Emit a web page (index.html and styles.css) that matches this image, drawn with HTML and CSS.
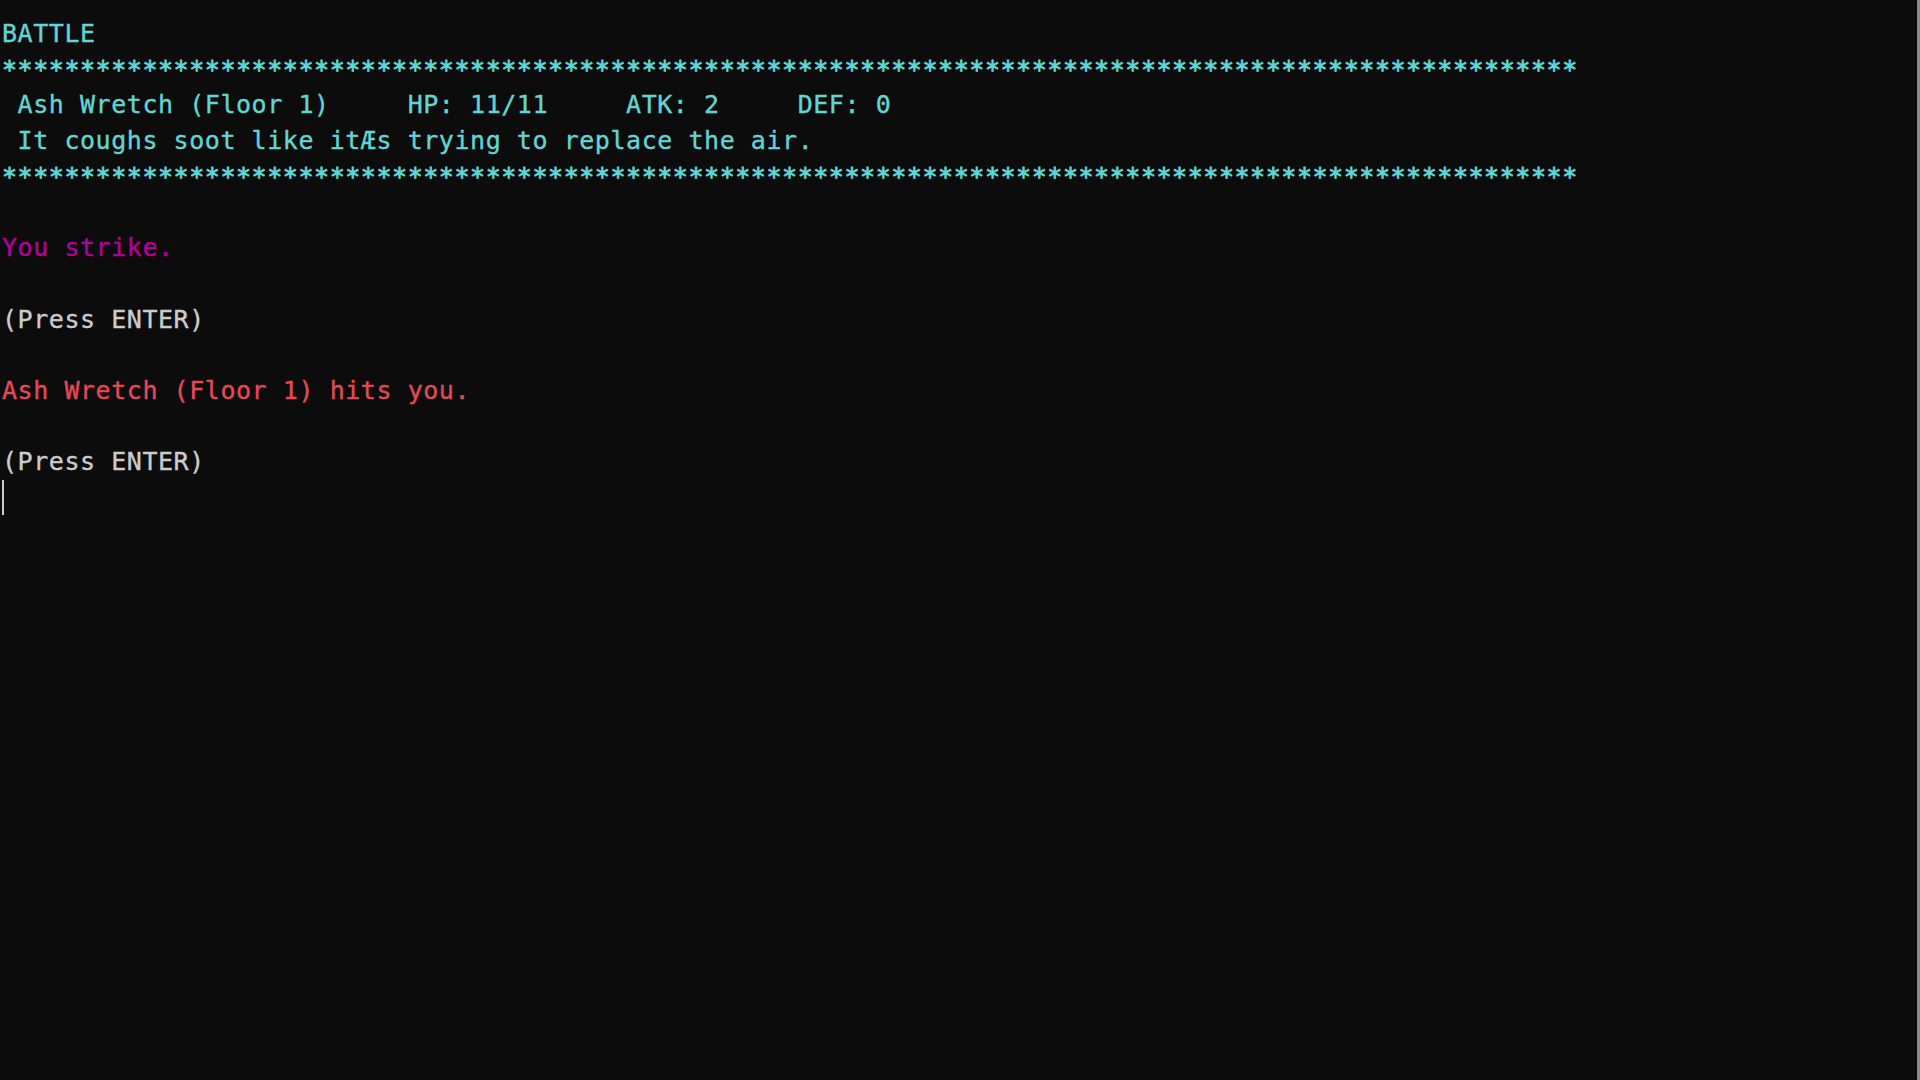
FILE: index.html
```html
<!DOCTYPE html>
<html>
<head>
<meta charset="utf-8">
<link rel="stylesheet" href="styles.css">
</head>
<body>
<div class="terminal">
<pre class="screen"><span class="cyan">BATTLE
<span class="stars">*****************************************************************************************************</span>
 Ash Wretch (Floor 1)     HP: 11/11     ATK: 2     DEF: 0
 It coughs soot like itÆs trying to replace the air.
<span class="stars">*****************************************************************************************************</span></span>

<span class="magenta">You strike.</span>

<span class="white">(Press ENTER)</span>

<span class="red">Ash Wretch (Floor 1) hits you.</span>

<span class="white">(Press ENTER)</span>
<span class="cursor"></span></pre>
<div class="scrollbar"></div>
</div>
</body>
</html>
```
FILE: styles.css
```css
html, body {
  margin: 0;
  padding: 0;
  background: #0c0c0c;
  width: 1920px;
  height: 1080px;
  overflow: hidden;
}
.terminal {
  display: flex;
  width: 1920px;
  height: 1080px;
  background: #0c0c0c;
}
.screen {
  flex: 1;
  margin: 0;
  padding: 16px 0 0 2px;
  font-family: "DejaVu Sans Mono", "Liberation Mono", monospace;
  font-size: 25px;
  letter-spacing: 0.55px;
  line-height: 35.7px;
  color: #cccccc;
  white-space: pre;
  -webkit-text-stroke: 0.35px currentColor;
}
.stars {
  -webkit-text-stroke: 0.8px currentColor;
}
.cyan { color: #61d6d6; }
.magenta { color: #b4009e; }
.red { color: #e74856; }
.white { color: #cccccc; }
.cursor {
  display: inline-block;
  width: 2px;
  height: 35px;
  background: #cccccc;
  vertical-align: top;
}
.scrollbar {
  width: 3px;
  margin-left: 2px;
  border-left: 1px solid #050505;
  background: #8a8a8a;
}
```
